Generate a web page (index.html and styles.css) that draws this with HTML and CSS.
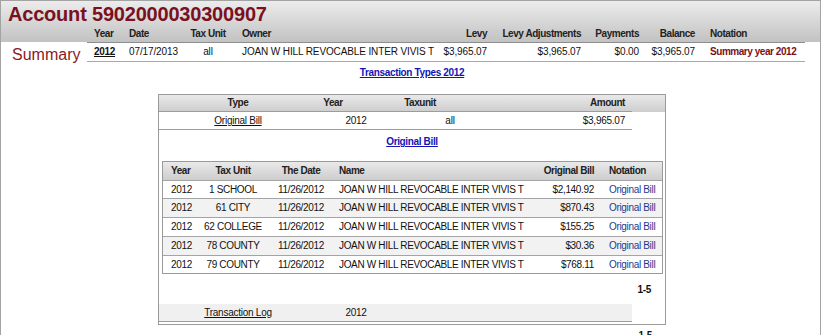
FILE: index.html
```html
<!DOCTYPE html>
<html>
<head>
<meta charset="utf-8">
<title>Account 5902000030300907</title>
<link rel="stylesheet" href="styles.css">
</head>
<body>
<div class="account">
  <h1 class="account-title">Account 5902000030300907</h1>

  <div class="summary">
    <div class="summary-caption-head"></div>
    <div class="sh pl7">Year</div>
    <div class="sh pl7">Date</div>
    <div class="sh c">Tax Unit</div>
    <div class="sh pl11">Owner</div>
    <div class="sh r">Levy</div>
    <div class="sh r">Levy Adjustments</div>
    <div class="sh r">Payments</div>
    <div class="sh r">Balance</div>
    <div class="sh pl8">Notation</div>

    <div class="summary-caption">Summary</div>
    <div class="sd pl7"><a class="year-link" href="#">2012</a></div>
    <div class="sd pl7">07/17/2013</div>
    <div class="sd c">all</div>
    <div class="sd pl11">JOAN W HILL REVOCABLE INTER VIVIS T</div>
    <div class="sd r">$3,965.07</div>
    <div class="sd r">$3,965.07</div>
    <div class="sd r">$0.00</div>
    <div class="sd r">$3,965.07</div>
    <div class="sd pl8 notation">Summary year 2012</div>
  </div>

  <div class="types">
    <div class="section-link"><a href="#">Transaction Types 2012</a></div>

    <div class="types-box">
      <div class="types-head">
        <div class="types-grid head-cols">
          <div class="c">Type</div>
          <div class="c">Year</div>
          <div class="c">Taxunit</div>
          <div class="r">Amount</div>
        </div>
      </div>
      <div class="types-grid data-cols">
        <div class="c"><a class="plain-link" href="#">Original Bill</a></div>
        <div class="c">2012</div>
        <div class="c">all</div>
        <div class="r">$3,965.07</div>
      </div>

      <div class="section-link sub"><a href="#">Original Bill</a></div>

      <div class="bill-table">
        <div class="bill-row bill-head">
          <div class="pl8">Year</div>
          <div class="c">Tax Unit</div>
          <div class="c date">The Date</div>
          <div class="pl7">Name</div>
          <div class="r">Original Bill</div>
          <div class="pl8">Notation</div>
        </div>
        <div class="bill-row edge">
          <div class="pl8">2012</div>
          <div class="c">1 SCHOOL</div>
          <div class="c date">11/26/2012</div>
          <div class="pl7">JOAN W HILL REVOCABLE INTER VIVIS T</div>
          <div class="r">$2,140.92</div>
          <div class="pl8 note">Original Bill</div>
        </div>
        <div class="bill-row alt">
          <div class="pl8">2012</div>
          <div class="c">61 CITY</div>
          <div class="c date">11/26/2012</div>
          <div class="pl7">JOAN W HILL REVOCABLE INTER VIVIS T</div>
          <div class="r">$870.43</div>
          <div class="pl8 note">Original Bill</div>
        </div>
        <div class="bill-row">
          <div class="pl8">2012</div>
          <div class="c">62 COLLEGE</div>
          <div class="c date">11/26/2012</div>
          <div class="pl7">JOAN W HILL REVOCABLE INTER VIVIS T</div>
          <div class="r">$155.25</div>
          <div class="pl8 note">Original Bill</div>
        </div>
        <div class="bill-row alt">
          <div class="pl8">2012</div>
          <div class="c">78 COUNTY</div>
          <div class="c date">11/26/2012</div>
          <div class="pl7">JOAN W HILL REVOCABLE INTER VIVIS T</div>
          <div class="r">$30.36</div>
          <div class="pl8 note">Original Bill</div>
        </div>
        <div class="bill-row edge last">
          <div class="pl8">2012</div>
          <div class="c">79 COUNTY</div>
          <div class="c date">11/26/2012</div>
          <div class="pl7">JOAN W HILL REVOCABLE INTER VIVIS T</div>
          <div class="r">$768.11</div>
          <div class="pl8 note">Original Bill</div>
        </div>
      </div>

      <div class="pager inner">1-5</div>

      <div class="types-grid data-cols log-row">
        <div class="c"><a class="plain-link" href="#">Transaction Log</a></div>
        <div class="c">2012</div>
        <div class="c"></div>
        <div class="r"></div>
      </div>
    </div>

    <div class="pager outer">1-5</div>
  </div>
</div>
</body>
</html>
```

FILE: styles.css
```css
* {
  box-sizing: border-box;
}

body {
  margin: 0;
  background: #fff;
  font-family: "Liberation Sans", Arial, sans-serif;
  font-size: 10px;
  letter-spacing: -0.12px;
  color: #111;
}

a {
  color: inherit;
}

/* outer account panel */
.account {
  width: 821px;
  border: 1px solid #a3a3a3;
  border-bottom: none;
  background: #fff linear-gradient(#ececec, #c2c2c2) top left / 100% 41px no-repeat;
  padding-bottom: 30px;
}

.account-title {
  margin: 0;
  padding-left: 7px;
  font-size: 20px;
  line-height: 26px;
  font-weight: bold;
  letter-spacing: -0.2px;
  color: #7b1020;
}

/* summary table */
.summary {
  display: grid;
  grid-template-columns: 86px 35px 63px 46px 209px 54px 94px 58px 56px 103px;
  width: 804px;
}

.sh {
  line-height: 13px;
  padding-bottom: 2px;
  border-bottom: 1px solid #8e8e8e;
  font-weight: bold;
  letter-spacing: -0.45px;
  color: #222;
  white-space: nowrap;
}

.sd {
  line-height: 18px;
  border-bottom: 1px solid #a8a8a8;
  white-space: nowrap;
}

.summary-caption {
  padding-left: 11px;
  font-size: 16px;
  line-height: 18px;
  padding-top: 3px;
  margin-bottom: -3px;
  letter-spacing: 0;
  color: #8a1a1f;
  white-space: nowrap;
}

.year-link {
  font-weight: bold;
  letter-spacing: -0.3px;
  color: #111;
}

.notation {
  font-weight: bold;
  letter-spacing: -0.45px;
  color: #7b1020;
}

.pl7 { padding-left: 7px; }
.pl8 { padding-left: 8px; }
.pl11 { padding-left: 11px; }
.c { text-align: center; }
.r { text-align: right; padding-right: 7px; }

/* transaction types block */
.types {
  margin-left: 157px;
  width: 508px;
}

.section-link {
  text-align: center;
  padding-top: 4px;
  line-height: 14px;
  font-weight: bold;
  letter-spacing: -0.35px;
}

.section-link a {
  color: #1414b4;
}

.section-link.sub {
  padding-top: 5px;
}

.types-box {
  margin-top: 14px;
  border: 1px solid #9a9a9a;
  padding-bottom: 2px;
}

.types-head {
  background: linear-gradient(#e9e9e9, #cdcdcd);
}

.types-grid {
  display: grid;
  width: 473px;
  border-bottom: 1px solid #9c9c9c;
  white-space: nowrap;
}

.head-cols {
  grid-template-columns: 158px 32px 142px 141px;
  line-height: 16px;
  font-weight: bold;
  letter-spacing: -0.45px;
  color: #222;
}

.data-cols {
  grid-template-columns: 158px 78px 110px 127px;
  line-height: 17px;
  letter-spacing: -0.25px;
}

.plain-link {
  color: #111;
}

/* original bill detail table */
.bill-table {
  margin: 12px 2px 0 3px;
  border: 1px solid #9a9a9a;
}

.bill-row {
  display: grid;
  grid-template-columns: 41px 58px 70px 198px 71px 61px;
  line-height: 18px;
  border-bottom: 1px solid #a4a4a4;
  letter-spacing: -0.33px;
  white-space: nowrap;
}

.bill-row.edge {
  line-height: 17px;
}

.bill-row.last {
  border-bottom: none;
}

.bill-row.alt {
  background: #f2f2f2;
}

.bill-head {
  line-height: 18px;
  background: linear-gradient(#e9e9e9, #cdcdcd);
  font-weight: bold;
  letter-spacing: -0.45px;
  color: #222;
}

.date {
  padding-left: 8px;
}

.note {
  color: #1d3a8e;
}

.pager {
  text-align: right;
  line-height: 14px;
  font-weight: bold;
  letter-spacing: -0.3px;
}

.pager.inner {
  margin-top: 9px;
  padding-right: 14px;
}

.pager.outer {
  margin-top: 4px;
  padding-right: 14px;
}

.log-row {
  margin-top: 7px;
  background: #f0f0f0;
}
```
